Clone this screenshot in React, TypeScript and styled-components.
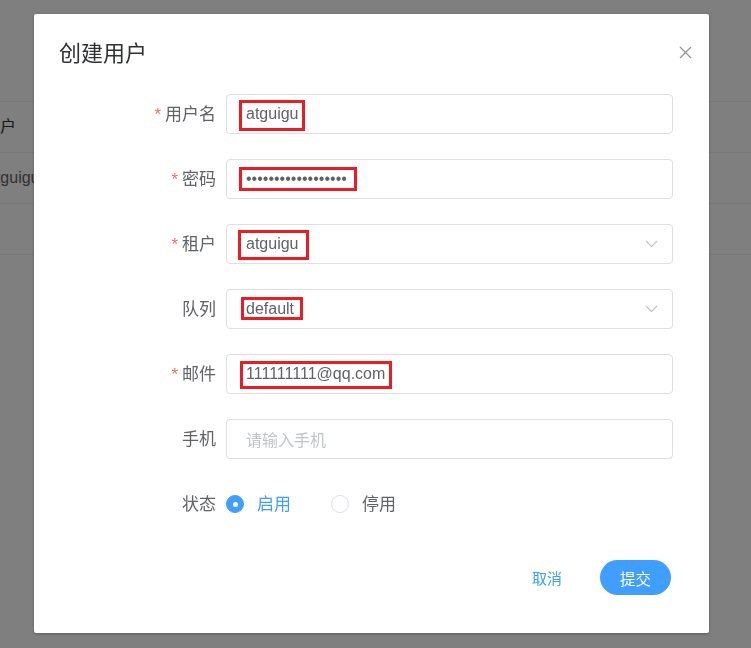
import React from 'react';
import styled, { createGlobalStyle } from 'styled-components';

const GlobalStyle = createGlobalStyle`
    html, body {
        margin: 0;
        padding: 0;
        background: #fff;
        font-family: "Liberation Sans", "Noto Sans CJK SC", sans-serif;
    }
    * {
        box-sizing: border-box;
    }
`;

const Page = styled.div`
    min-height: 100vh;
    padding-top: 101px;
    overflow: hidden;
`;

const Table = styled.div`
    margin-left: -16px;
    width: calc(100% + 16px);
    border-top: 1px solid #ebeef5;
`;

const TableRow = styled.div<{ $head?: boolean }>`
    display: flex;
    align-items: center;
    height: 51px;
    padding: ${({ $head }) => ($head ? '0 0 5px 0' : '0 0 0 3px')};
    border-bottom: 1px solid #ebeef5;
    font-size: 16px;
    color: ${({ $head }) => ($head ? '#303133' : '#606266')};
`;

const Overlay = styled.div`
    position: fixed;
    inset: 0;
    background: rgba(0, 0, 0, 0.5);
`;

const DialogWrap = styled.div`
    position: fixed;
    inset: 0;
`;

const Dialog = styled.div`
    width: 675px;
    margin: 14px 0 0 34px;
    background: #fff;
    border-radius: 2px;
    box-shadow: 0 1px 3px rgba(0, 0, 0, 0.3);
`;

const Header = styled.div`
    display: flex;
    align-items: center;
    justify-content: space-between;
    padding: 25px 17px 0 25px;
`;

const Title = styled.span`
    font-size: 22px;
    line-height: 30px;
    color: #303133;
`;

const CloseButton = styled.button`
    display: flex;
    padding: 0;
    margin-top: -3px;
    border: none;
    background: none;
    cursor: pointer;
`;

const Form = styled.div`
    display: flex;
    flex-direction: column;
    gap: 25px;
    margin-top: 25px;
    padding-left: 25px;
`;

const FormRow = styled.div`
    display: grid;
    grid-template-columns: 167px 447px;
    align-items: center;
`;

const Label = styled.label`
    display: flex;
    align-items: center;
    justify-content: flex-end;
    height: 40px;
    padding: 1px 10px 0 0;
    font-size: 17px;
    line-height: 24px;
    color: #606266;
`;

const Required = styled.span`
    margin-right: 4px;
    color: #f56c6c;
`;

const Field = styled.div<{ $placeholder?: boolean }>`
    position: relative;
    display: flex;
    align-items: center;
    height: 40px;
    padding: 0 14px 0 19px;
    border: 1px solid #dcdfe6;
    border-radius: 4px;
    font-size: 16px;
    color: ${({ $placeholder }) => ($placeholder ? '#c0c4cc' : '#606266')};
`;

const Value = styled.span`
    white-space: nowrap;
`;

const Mark = styled.span<{ $x: number; $y: number; $w: number; $h: number }>`
    position: absolute;
    left: ${({ $x }) => $x}px;
    top: ${({ $y }) => $y}px;
    width: ${({ $w }) => $w}px;
    height: ${({ $h }) => $h}px;
    border: 3px solid #ec1c24;
`;

const Arrow = styled.svg`
    margin-left: auto;
`;

const RadioGroup = styled.div`
    display: flex;
    align-items: center;
    height: 40px;
`;

const RadioItem = styled.label<{ $checked?: boolean }>`
    display: flex;
    align-items: center;
    margin-right: 40px;
    padding-top: 1px;
    font-size: 17px;
    line-height: 24px;
    color: ${({ $checked }) => ($checked ? '#409eff' : '#606266')};
    cursor: pointer;
`;

const RadioDot = styled.span<{ $checked?: boolean }>`
    display: flex;
    align-items: center;
    justify-content: center;
    width: 18px;
    height: 18px;
    margin: -1px 13px 0 0;
    border-radius: 50%;
    border: 1px solid ${({ $checked }) => ($checked ? '#409eff' : '#dcdfe6')};
    background: ${({ $checked }) => ($checked ? '#409eff' : '#fff')};
    &::after {
        content: '';
        width: 5px;
        height: 5px;
        border-radius: 50%;
        background: #fff;
    }
`;

const Footer = styled.div`
    display: flex;
    justify-content: flex-end;
    align-items: center;
    padding: 36px 38px 38px 0;
`;

const TextButton = styled.button`
    padding: 0 18px;
    margin-right: 20px;
    border: none;
    background: none;
    font-family: inherit;
    font-size: 15px;
    color: #409eff;
    cursor: pointer;
`;

const PrimaryButton = styled.button`
    height: 35px;
    padding: 0 20px;
    border: none;
    border-radius: 18px;
    background: #409eff;
    font-family: inherit;
    font-size: 15.5px;
    color: #fff;
    cursor: pointer;
`;

const Chevron = () => (
    <Arrow width="13" height="8" viewBox="0 0 13 8">
        <polyline points="1,1 6.5,6.5 12,1" fill="none" stroke="#c0c4cc" strokeWidth="1.2" />
    </Arrow>
);

interface MarkBox { x: number; y: number; w: number; h: number }

interface Item {
    label: string;
    required?: boolean;
    value?: string;
    placeholder?: string;
    select?: boolean;
    mark?: MarkBox;
}

const items: Item[] = [
    { label: '用户名', required: true, value: 'atguigu', mark: { x: 12, y: 5, w: 66, h: 31 } },
    { label: '密码', required: true, value: '••••••••••••••••••', mark: { x: 12, y: 7, w: 118, h: 24 } },
    { label: '租户', required: true, value: 'atguigu', select: true, mark: { x: 11, y: 5, w: 71, h: 30 } },
    { label: '队列', value: 'default', select: true, mark: { x: 14, y: 7, w: 62, h: 23 } },
    { label: '邮件', required: true, value: '111111111@qq.com', mark: { x: 13, y: 6, w: 152, h: 28 } },
    { label: '手机', placeholder: '请输入手机' },
];

export default function App() {
    const [enabled, setEnabled] = React.useState(true);

    return (
        <>
            <GlobalStyle />
            <Page>
                <Table>
                    <TableRow $head>用户</TableRow>
                    <TableRow>atguigu</TableRow>
                    <TableRow />
                </Table>
            </Page>
            <Overlay />
            <DialogWrap>
                <Dialog>
                    <Header>
                        <Title>创建用户</Title>
                        <CloseButton aria-label="close">
                            <svg width="13" height="13" viewBox="0 0 13 13">
                                <path d="M1 1 L12 12 M12 1 L1 12" stroke="#909399" strokeWidth="1.3" />
                            </svg>
                        </CloseButton>
                    </Header>
                    <Form>
                        {items.map(item => (
                            <FormRow key={item.label}>
                                <Label>
                                    {item.required && <Required>*</Required>}
                                    {item.label}
                                </Label>
                                <Field $placeholder={!item.value}>
                                    <Value>{item.value || item.placeholder}</Value>
                                    {item.select && <Chevron />}
                                    {item.mark && <Mark $x={item.mark.x} $y={item.mark.y} $w={item.mark.w} $h={item.mark.h} />}
                                </Field>
                            </FormRow>
                        ))}
                        <FormRow>
                            <Label>状态</Label>
                            <RadioGroup>
                                <RadioItem $checked={enabled} onClick={() => setEnabled(true)}>
                                    <RadioDot $checked={enabled} />
                                    启用
                                </RadioItem>
                                <RadioItem $checked={!enabled} onClick={() => setEnabled(false)}>
                                    <RadioDot $checked={!enabled} />
                                    停用
                                </RadioItem>
                            </RadioGroup>
                        </FormRow>
                    </Form>
                    <Footer>
                        <TextButton>取消</TextButton>
                        <PrimaryButton>提交</PrimaryButton>
                    </Footer>
                </Dialog>
            </DialogWrap>
        </>
    );
}
